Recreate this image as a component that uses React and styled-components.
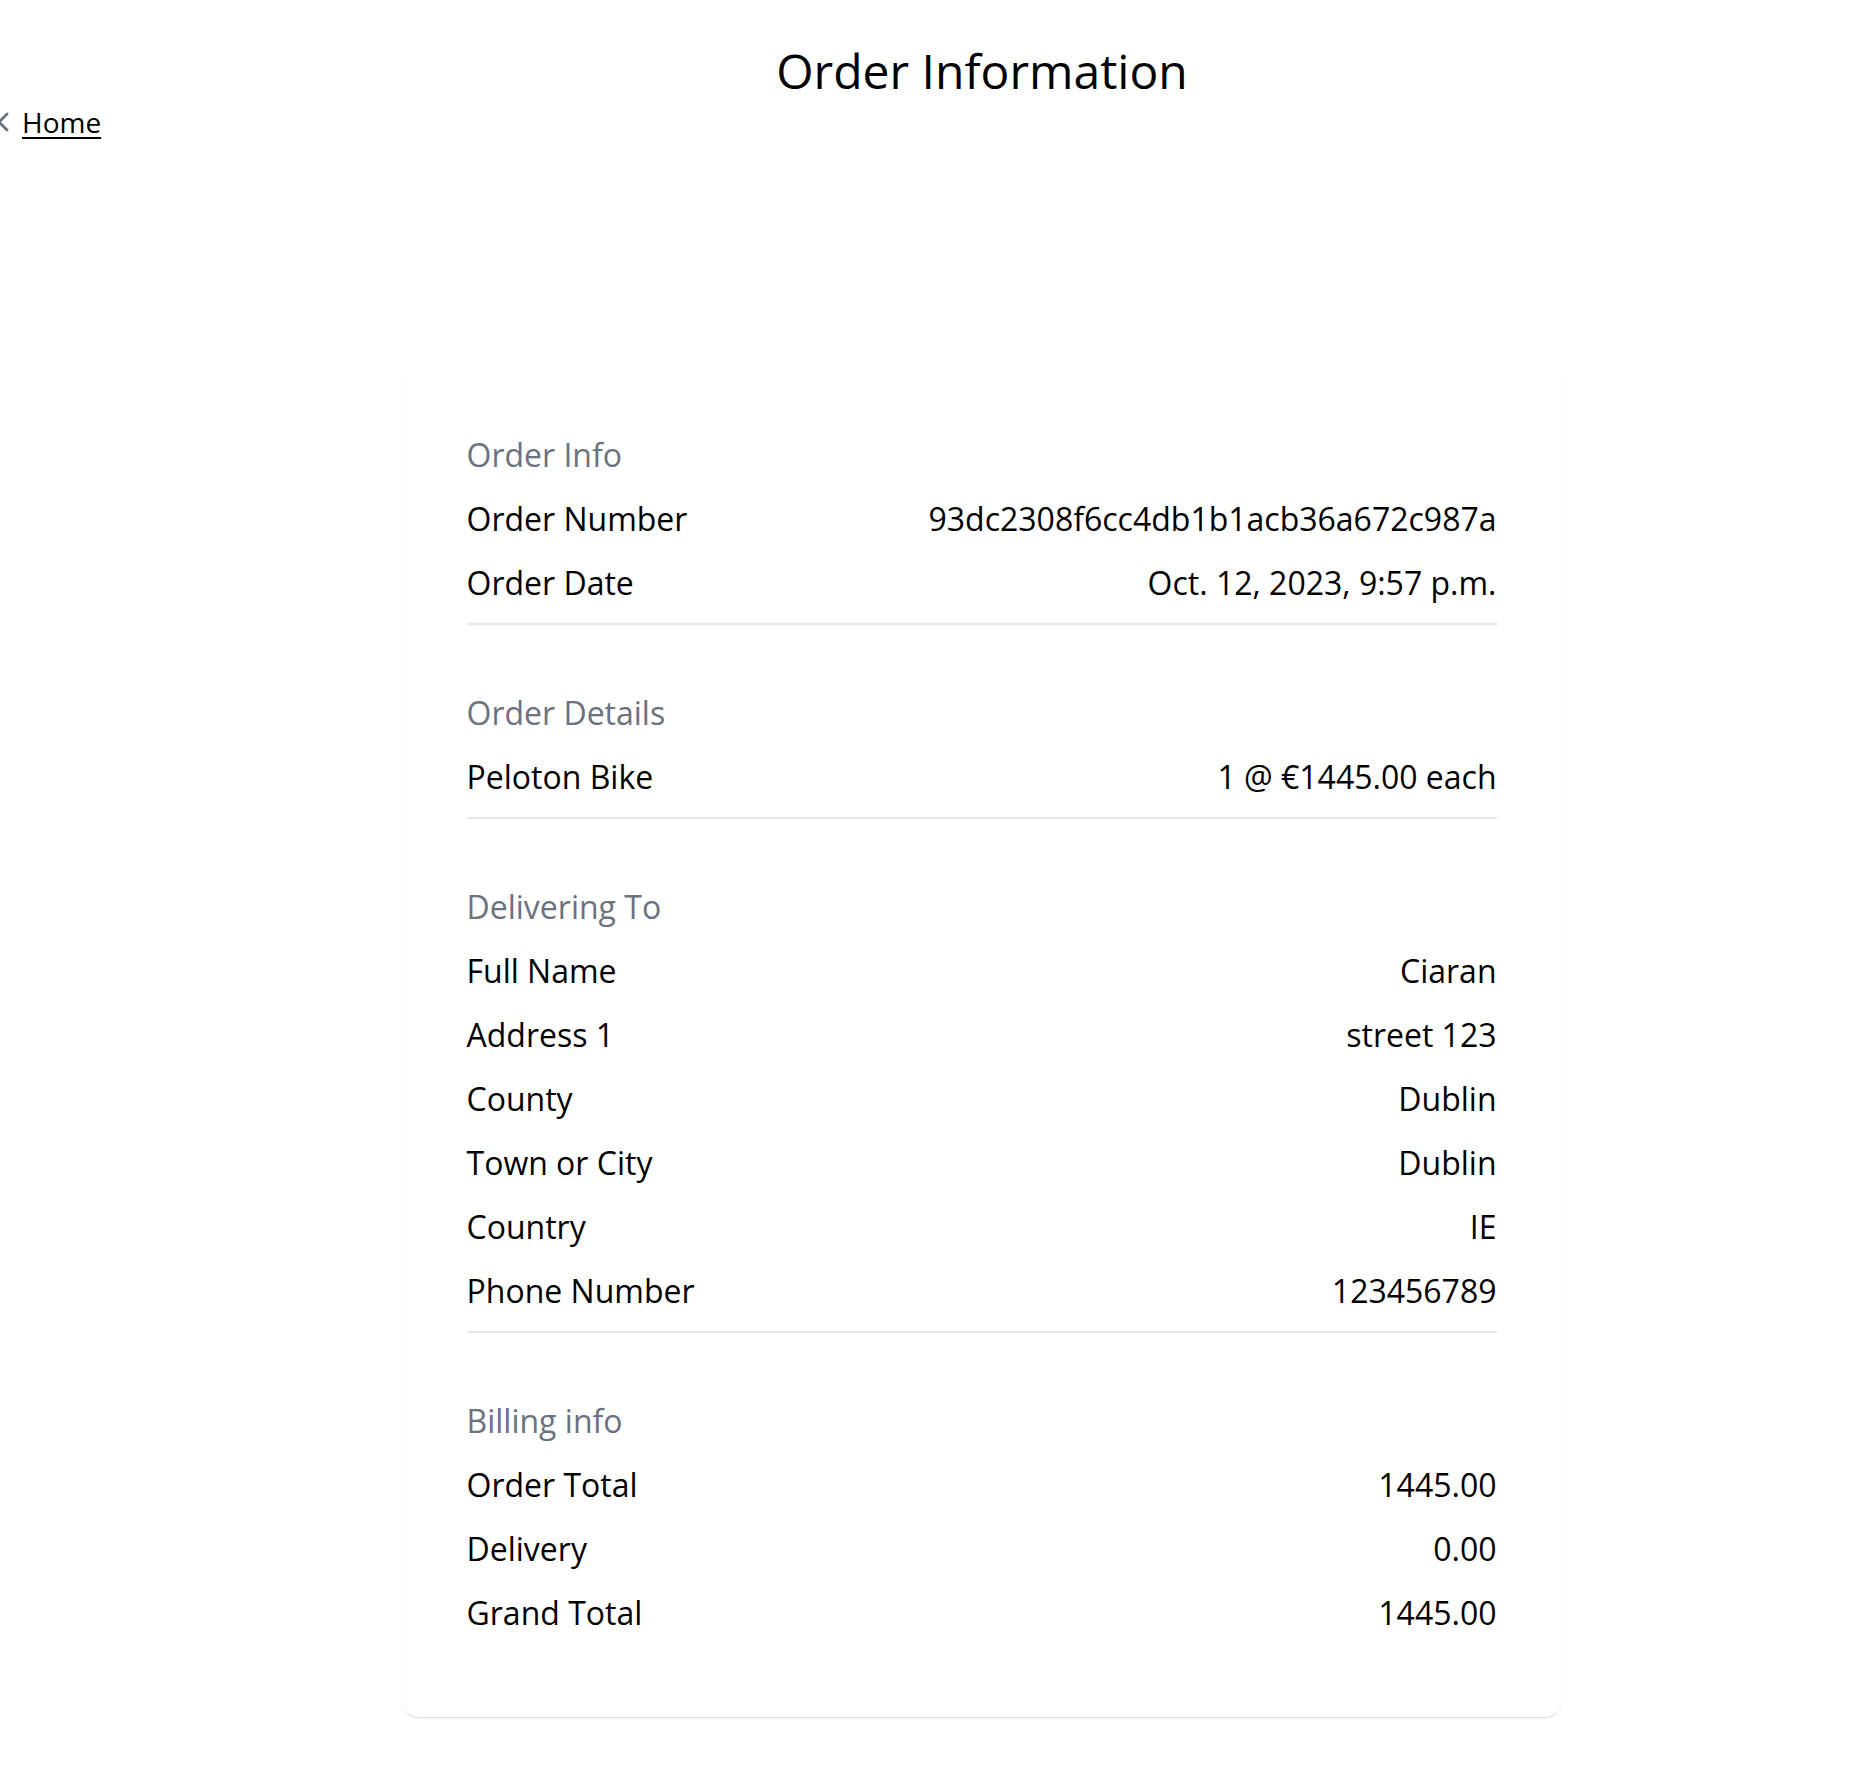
import React from "react";
import styled, { createGlobalStyle } from "styled-components";

const GlobalStyle = createGlobalStyle`
  html, body {
    margin: 0;
    padding: 0;
    background: #ffffff;
    overflow-x: hidden;
  }
  body {
    font-family: "Open Sans", "Noto Sans", "DejaVu Sans", sans-serif;
    color: #000000;
  }
`;

const Page = styled.div`
  display: flex;
  flex-direction: column;
  width: 100%;
`;

const Title = styled.h1`
  margin: 39px 0 0;
  padding-left: 108px;
  text-align: center;
  font-size: 48px;
  line-height: 64px;
  font-weight: 400;
  color: #000;
`;

const BackLink = styled.a`
  display: flex;
  align-items: center;
  gap: 13px;
  margin-left: -3px;
  height: 38px;
  font-size: 28px;
  line-height: 38px;
  color: #000;
  text-decoration: none;
  align-self: flex-start;
`;

const BackText = styled.span`
  text-decoration: underline;
  text-decoration-thickness: 2px;
  text-underline-offset: 4px;
`;

const CardWrap = styled.div`
  display: flex;
  justify-content: center;
  padding-left: 107px;
  margin-top: 218px;
  padding-bottom: 40px;
`;

const Card = styled.div`
  width: 1158px;
  box-sizing: border-box;
  padding: 8px 64px 64px;
  background: #fff;
  border-radius: 16px;
  box-shadow: 0 2px 2px -1px rgba(0, 0, 0, 0.16), 0 1px 1px -1px rgba(0, 0, 0, 0.1);
`;

const Section = styled.section`
  padding: 56px 0 8px;
  border-bottom: ${(p) => (p.$last ? "none" : "2px solid #e5e7eb")};
`;

const SectionTitle = styled.h2`
  margin: 0;
  font-size: 32px;
  line-height: 64px;
  font-weight: 400;
  color: #6b7280;
`;

const Row = styled.div`
  display: flex;
  justify-content: space-between;
  align-items: center;
  font-size: 32px;
  line-height: 64px;
  color: #000;
`;

const Label = styled.span``;
const Value = styled.span`
  text-align: right;
`;

const Chevron = () => (
  <svg width="12" height="20" viewBox="0 0 12 20" fill="none">
    <path d="M10 2 L2 10 L10 18" stroke="#6b7280" strokeWidth="2.8" strokeLinecap="round" strokeLinejoin="round" />
  </svg>
);

const sections = [
  {
    title: "Order Info",
    rows: [
      ["Order Number", "93dc2308f6cc4db1b1acb36a672c987a"],
      ["Order Date", "Oct. 12, 2023, 9:57 p.m."],
    ],
  },
  {
    title: "Order Details",
    rows: [["Peloton Bike", "1 @ €1445.00 each"]],
  },
  {
    title: "Delivering To",
    rows: [
      ["Full Name", "Ciaran"],
      ["Address 1", "street 123"],
      ["County", "Dublin"],
      ["Town or City", "Dublin"],
      ["Country", "IE"],
      ["Phone Number", "123456789"],
    ],
  },
  {
    title: "Billing info",
    rows: [
      ["Order Total", "1445.00"],
      ["Delivery", "0.00"],
      ["Grand Total", "1445.00"],
    ],
  },
];

export default function App() {
  return (
    <>
      <GlobalStyle />
      <Page>
        <Title>Order Information</Title>
        <BackLink href="#">
          <Chevron />
          <BackText>Home</BackText>
        </BackLink>
        <CardWrap>
          <Card>
            {sections.map((s, i) => (
              <Section key={s.title} $last={i === sections.length - 1}>
                <SectionTitle>{s.title}</SectionTitle>
                {s.rows.map(([l, v]) => (
                  <Row key={l}>
                    <Label>{l}</Label>
                    <Value>{v}</Value>
                  </Row>
                ))}
              </Section>
            ))}
          </Card>
        </CardWrap>
      </Page>
    </>
  );
}
